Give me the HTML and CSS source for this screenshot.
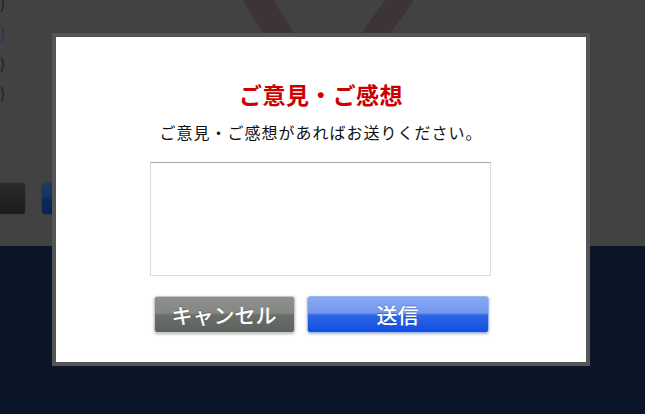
FILE: index.html
```html
<!DOCTYPE html>
<html lang="ja">
<head>
    <meta charset="UTF-8">
    <meta name="viewport" content="width=device-width, initial-scale=1.0">
    <title>ご意見・ご感想</title>
    <link rel="stylesheet" href="styles.css">
</head>
<body>
    <!-- Page behind the dimmed overlay -->
    <div class="page">
        <div class="page-main">
            <div class="side">
                <p class="side-line">)</p>
                <p class="side-line link">)</p>
                <p class="side-line">)</p>
                <p class="side-line">)</p>
                <div class="side-buttons">
                    <span class="page-btn dark"></span>
                    <span class="page-btn blue"></span>
                </div>
            </div>
            <svg class="ghost-logo" width="585" height="120" viewBox="0 0 585 120">
                <polygon points="183,0 213,0 290,120 255,120" fill="#3d3535"/>
                <polygon points="325,0 354,0 270,120 240,120" fill="#3d3535"/>
            </svg>
        </div>
        <div class="page-footer"></div>
    </div>

    <!-- Feedback dialog -->
    <div class="overlay">
        <div class="dialog">
            <h2 class="dialog-title">ご意見・ご感想</h2>
            <p class="dialog-text">ご意見・ご感想があればお送りください。</p>
            <textarea class="feedback-input"></textarea>
            <div class="dialog-buttons">
                <button class="btn btn-cancel">キャンセル</button>
                <button class="btn btn-send">送信</button>
            </div>
        </div>
    </div>
</body>
</html>
```

FILE: styles.css
```css
html, body {
    margin: 0;
    padding: 0;
}
body {
    width: 645px;
    height: 414px;
    overflow: hidden;
    background-color: #424242;
    font-family: "Noto Sans CJK JP", "Liberation Sans", sans-serif;
}
.page {
    display: flex;
    flex-direction: column;
    height: 414px;
}
.page-main {
    height: 246px;
    display: flex;
    background-color: #424242;
}
.side {
    width: 60px;
    flex-shrink: 0;
    display: flex;
    flex-direction: column;
}
.side-line {
    margin: 0 0 12px 0;
    height: 18px;
    font-size: 15px;
    line-height: 18px;
    color: #1e1e1e;
}
.side-line:first-child {
    margin-top: -6px;
}
.side-line.link {
    color: #1d3558;
}
.side-buttons {
    display: flex;
    gap: 17px;
    margin-top: 69px;
}
.page-btn {
    display: block;
    flex-shrink: 0;
    height: 31px;
    border-radius: 3px;
    box-shadow: 0 0 2px rgba(0,0,0,0.4);
}
.page-btn.dark {
    width: 29px;
    margin-left: -4px;
    background: linear-gradient(#2b2b2b, #1c1c1c);
}
.page-btn.blue {
    width: 30px;
    background: linear-gradient(#1d3b66 0%, #14325e 45%, #0a2858 55%, #07245a 100%);
}
.ghost-logo {
    display: block;
}
.page-footer {
    flex: 1;
    background-color: #0a1627;
}
.overlay {
    position: fixed;
    top: 0;
    left: 0;
    right: 0;
    bottom: 0;
    padding: 33px 0 0 52px;
}
.dialog {
    box-sizing: border-box;
    width: 538px;
    height: 333px;
    border: 4px solid #555555;
    background-color: #ffffff;
    padding-top: 42px;
    display: flex;
    flex-direction: column;
    align-items: center;
}
.dialog-title {
    margin: 0;
    font-size: 23px;
    line-height: 30px;
    font-weight: bold;
    color: #cc0000;
    letter-spacing: 0.4px;
}
.dialog-text {
    margin: 11px 0 0;
    font-size: 16px;
    line-height: 24px;
    color: #111111;
    letter-spacing: 1px;
}
.feedback-input {
    box-sizing: border-box;
    width: 341px;
    height: 114px;
    margin: 18px 0 0 -1px;
    border: 1px solid #dcdcdc;
    border-top-color: #a8a8a8;
    resize: none;
    outline: none;
    font-family: inherit;
}
.dialog-buttons {
    display: flex;
    gap: 12px;
    margin-top: 20px;
}
.btn {
    box-sizing: border-box;
    height: 37px;
    padding: 0;
    border-radius: 3px;
    font-family: inherit;
    font-size: 21px;
    font-weight: 500;
    line-height: 33px;
    color: #ffffff;
    text-shadow: 0 -1px 0 rgba(0,0,0,0.25);
    cursor: pointer;
    box-shadow: 0 1px 3px rgba(0,0,0,0.3);
}
.btn-cancel {
    width: 141px;
    border: 1px solid #c8c8c8;
    background: linear-gradient(#8e908e 0%, #858785 45%, #6a6e6a 52%, #5d615d 100%);
}
.btn-send {
    width: 182px;
    border: 1px solid #9fb8ee;
    background: linear-gradient(#88a8f2 0%, #7297ee 45%, #2f66e6 52%, #0f4ee0 100%);
}
.btn:hover {
    filter: brightness(1.05);
}
```
